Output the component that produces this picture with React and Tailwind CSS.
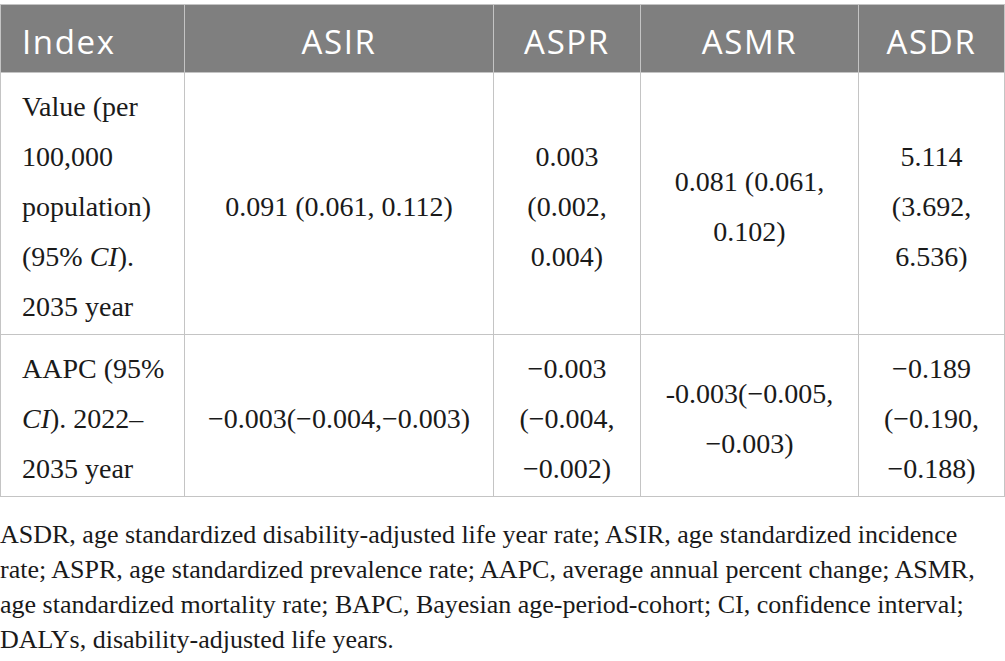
const rows = [
  {
    label: (
      <>
        Value (per
        <br />
        100,000
        <br />
        population)
        <br />
        (95% <i>CI</i>).
        <br />
        2035 year
      </>
    ),
    cells: [
      '0.091 (0.061, 0.112)',
      <>0.003<br />(0.002,<br />0.004)</>,
      <>0.081 (0.061,<br />0.102)</>,
      <>5.114<br />(3.692,<br />6.536)</>,
    ],
  },
  {
    label: (
      <>
        AAPC (95%
        <br />
        <i>CI</i>). 2022–
        <br />
        2035 year
      </>
    ),
    cells: [
      '−0.003(−0.004,−0.003)',
      <>−0.003<br />(−0.004,<br />−0.002)</>,
      <>-0.003(−0.005,<br />−0.003)</>,
      <>−0.189<br />(−0.190,<br />−0.188)</>,
    ],
  },
];

const heads = ['ASIR', 'ASPR', 'ASMR', 'ASDR'];

const notes = [
  'ASDR, age standardized disability-adjusted life year rate; ASIR, age standardized incidence',
  'rate; ASPR, age standardized prevalence rate; AAPC, average annual percent change; ASMR,',
  'age standardized mortality rate; BAPC, Bayesian age-period-cohort; CI, confidence interval;',
  'DALYs, disability-adjusted life years.',
];

export default function App() {
  return (
    <div className="w-[1005px] h-[661px] bg-white pt-[4px] overflow-hidden">
      <table className="w-[1004px] border-collapse table-fixed">
        <colgroup>
          <col className="w-[184px]" />
          <col className="w-[309px]" />
          <col className="w-[147px]" />
          <col className="w-[218px]" />
          <col className="w-[146px]" />
        </colgroup>
        <thead>
          <tr className="bg-[#7f7f7f] h-[68px] font-['Open_Sans','Noto_Sans',sans-serif] text-[33px] tracking-[0.05em]">
            <th className="border border-[#c4c4c4] text-left font-normal text-white pl-[21px] pt-[6px]">Index</th>
            {heads.map((h) => (
              <th key={h} className="border border-[#c4c4c4] text-center font-normal text-white pt-[6px]">
                {h}
              </th>
            ))}
          </tr>
        </thead>
        <tbody className="font-['Liberation_Serif','Times_New_Roman',serif] text-[#1a1a1a] text-[28px] leading-[50px]">
          {rows.map((r, i) => (
            <tr key={i}>
              <td className="border border-[#c4c4c4] pl-[21px] pr-1 pt-[9px] pb-[2px] align-middle whitespace-nowrap">
                {r.label}
              </td>
              {r.cells.map((c, j) => (
                <td
                  key={j}
                  className="border border-[#c4c4c4] text-center px-1 pt-[9px] pb-[2px] align-middle whitespace-nowrap"
                >
                  {c}
                </td>
              ))}
            </tr>
          ))}
        </tbody>
      </table>
      <div className="font-['Liberation_Serif','Times_New_Roman',serif] text-[26px] leading-[35px] text-[#1a1a1a] mt-[20px]">
        {notes.map((n) => (
          <div key={n} className="whitespace-nowrap">
            {n}
          </div>
        ))}
      </div>
    </div>
  );
}
